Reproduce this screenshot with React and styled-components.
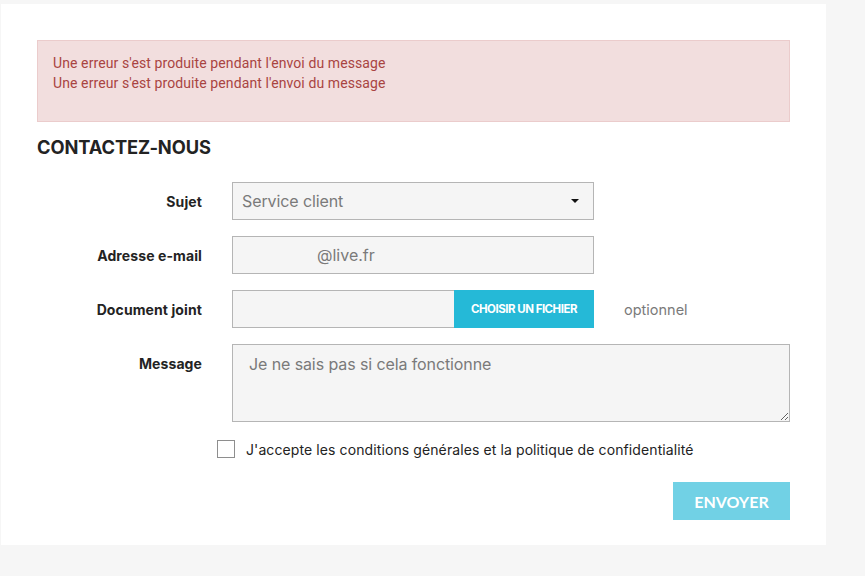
import React from "react";
import styled, { createGlobalStyle } from "styled-components";

const Global = createGlobalStyle`
  html, body { margin: 0; padding: 0; background: #f6f6f6; }
  body { font-family: Inter, "Noto Sans", sans-serif; color: #232323; }
  * { box-sizing: border-box; }
`;

const Page = styled.div`
  padding: 4px 0 0 1px;
  min-height: 576px;
`;

const Card = styled.section`
  width: 825px;
  height: 541px;
  background: #fff;
  padding: 36px;
`;

const Alert = styled.div`
  background: #f2dede;
  border: 1px solid #ebcccc;
  color: #a94442;
  font-family: Roboto, "Liberation Sans", sans-serif;
  font-size: 14px;
  line-height: 20px;
  letter-spacing: 0.1px;
  padding: 12px 15px 28px;
  height: 82px;
`;

const AlertLine = styled.div``;

const Title = styled.h1`
  margin: 13px 0 23px;
  font-size: 18.3px;
  line-height: 24px;
  font-weight: 700;
  color: #232323;
  letter-spacing: -0.1px;
`;

const Form = styled.form`
  display: grid;
  grid-template-columns: 165px 362px 1fr;
  column-gap: 30px;
  row-gap: 16px;
  align-items: center;
`;

const Label = styled.label`
  text-align: right;
  font-size: 14px;
  font-weight: 700;
  color: #232323;
  letter-spacing: 0.1px;
  align-self: ${(p) => (p.$top ? "start" : "center")};
  padding-top: ${(p) => (p.$top ? "11px" : "0")};
`;

const fieldBase = `
  background: #f5f5f5;
  border: 1px solid #b5b5b5;
  font-family: Inter, "Noto Sans", sans-serif;
  font-size: 16px;
  color: #7a7a7a;
  outline: none;
`;

const SelectBox = styled.div`
  ${fieldBase}
  height: 38px;
  display: flex;
  align-items: center;
  justify-content: space-between;
  padding: 0 14px 0 9px;
  letter-spacing: -0.1px;
`;

const Caret = styled.span`
  width: 0;
  height: 0;
  border-left: 4px solid transparent;
  border-right: 4px solid transparent;
  border-top: 4px solid #111;
`;

const TextInput = styled.input`
  ${fieldBase}
  height: 38px;
  width: 100%;
  padding: 0 9px;
  text-indent: ${(p) => p.$indent || 0}px;
`;

const FileGroup = styled.div`
  display: flex;
  height: 38px;
`;

const FileField = styled.div`
  ${fieldBase}
  flex: 1;
  border-right: none;
`;

const FileButton = styled.button`
  width: 140px;
  border: none;
  background: #25b9d7;
  color: #fff;
  font-family: Inter, "Noto Sans", sans-serif;
  font-weight: 700;
  font-size: 11.5px;
  letter-spacing: -0.5px;
  text-transform: uppercase;
  padding: 0;
`;

const Hint = styled.span`
  font-size: 14.5px;
  color: #7a7a7a;
`;

const TextArea = styled.textarea`
  ${fieldBase}
  grid-column: 2 / 4;
  height: 78px;
  resize: vertical;
  padding: 8px 16px;
  line-height: 22px;
  letter-spacing: -0.1px;
`;

const CheckRow = styled.label`
  grid-column: 2 / 4;
  margin-left: -15px;
  margin-top: 2px;
  display: flex;
  align-items: center;
  gap: 11px;
  font-size: 14px;
  letter-spacing: 0.1px;
  color: #232323;
`;

const Box = styled.span`
  width: 18px;
  height: 18px;
  border: 1px solid #8e8e8e;
  background: #fff;
  flex: none;
`;

const Actions = styled.div`
  grid-column: 1 / 4;
  display: flex;
  justify-content: flex-end;
  margin-top: 8px;
`;

const Submit = styled.button`
  width: 117px;
  height: 38px;
  border: none;
  background: #71d1e5;
  color: #fff;
  font-family: Lato, "Noto Sans", sans-serif;
  font-weight: 700;
  font-size: 16px;
  text-transform: uppercase;
  padding: 0;
`;

export default function App() {
  return (
    <>
      <Global />
      <Page>
        <Card>
          <Alert>
            <AlertLine>Une erreur s'est produite pendant l'envoi du message</AlertLine>
            <AlertLine>Une erreur s'est produite pendant l'envoi du message</AlertLine>
          </Alert>
          <Title>CONTACTEZ-NOUS</Title>
          <Form onSubmit={(e) => e.preventDefault()}>
            <Label>Sujet</Label>
            <SelectBox>
              <span>Service client</span>
              <Caret />
            </SelectBox>
            <span />

            <Label>Adresse e-mail</Label>
            <TextInput readOnly value="@live.fr" $indent={75} />
            <span />

            <Label>Document joint</Label>
            <FileGroup>
              <FileField />
              <FileButton type="button">Choisir un fichier</FileButton>
            </FileGroup>
            <Hint>optionnel</Hint>

            <Label $top>Message</Label>
            <TextArea readOnly value="Je ne sais pas si cela fonctionne" />

            <CheckRow>
              <Box />
              <span>J'accepte les conditions générales et la politique de confidentialité</span>
            </CheckRow>

            <Actions>
              <Submit type="submit">Envoyer</Submit>
            </Actions>
          </Form>
        </Card>
      </Page>
    </>
  );
}
